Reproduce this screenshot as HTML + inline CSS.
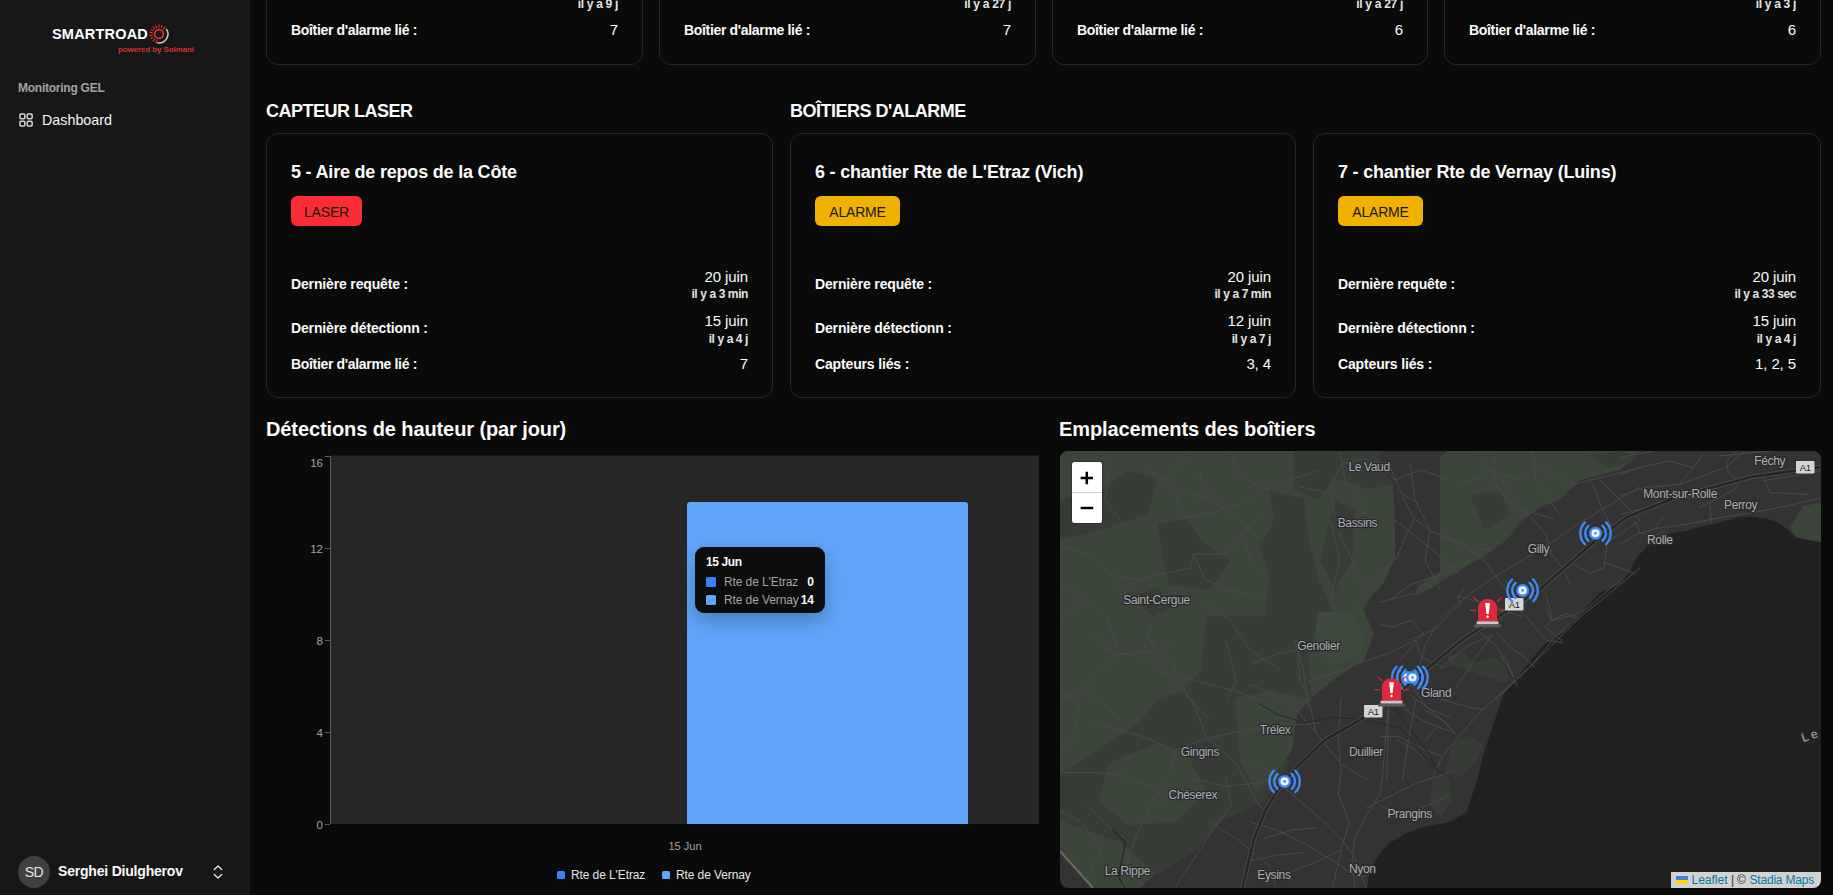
<!DOCTYPE html>
<html><head><meta charset="utf-8">
<style>
*{box-sizing:border-box;margin:0;padding:0}
html,body{width:1833px;height:895px;overflow:hidden;background:#0a0a0a;font-family:"Liberation Sans",sans-serif;color:#fafafa}
.abs{position:absolute}
#side{position:absolute;left:0;top:0;width:250px;height:895px;background:#171717}
.card{position:absolute;border:1px solid #262626;border-radius:12px;background:#0a0a0a}
.lbl{position:absolute;left:24px;font-weight:bold;font-size:14px;letter-spacing:-0.15px;white-space:nowrap}
.val{position:absolute;right:24px;text-align:right;white-space:nowrap;font-size:15px;letter-spacing:-0.1px}
.sub{position:absolute;right:24px;text-align:right;white-space:nowrap;font-size:12px;font-weight:bold;letter-spacing:-0.4px;color:#e5e5e5}
.title{position:absolute;left:24px;font-weight:bold;font-size:18px;letter-spacing:-0.2px;white-space:nowrap}
.badge{position:absolute;left:24px;top:62px;height:30px;border-radius:6px;font-size:14px;line-height:30px;padding:0 13px;color:#111;letter-spacing:-0.2px}
.h2{position:absolute;font-weight:bold;font-size:18px;letter-spacing:-0.5px;white-space:nowrap}
.h3{position:absolute;font-weight:bold;font-size:20px;letter-spacing:-0.15px;white-space:nowrap}
.t{position:absolute;line-height:1;white-space:nowrap}
</style></head>
<body>

<div id="side">
  <!-- logo -->
  <div class="abs" style="left:52px;top:26px;font-size:14.5px;font-weight:bold;letter-spacing:0.2px;color:#fff">SMARTROAD</div>
  <svg class="abs" style="left:149px;top:24px" width="22" height="22" viewBox="0 0 22 22"><g stroke="#e5322d" stroke-width="1.1"><line x1="14.05" y1="5.17" x2="16.17" y2="2.65"/><line x1="12.15" y1="4.08" x2="13.28" y2="0.98"/><line x1="10.00" y1="3.70" x2="10.00" y2="0.40"/><line x1="7.85" y1="4.08" x2="6.72" y2="0.98"/><line x1="5.95" y1="5.17" x2="3.83" y2="2.65"/><line x1="4.54" y1="6.85" x2="1.69" y2="5.20"/><line x1="3.80" y1="8.91" x2="0.55" y2="8.33"/><line x1="3.80" y1="11.09" x2="0.55" y2="11.67"/><line x1="4.54" y1="13.15" x2="1.69" y2="14.80"/><line x1="5.95" y1="14.83" x2="3.83" y2="17.35"/><line x1="7.85" y1="15.92" x2="6.72" y2="19.02"/></g><circle cx="10" cy="10" r="4.4" fill="none" stroke="#e5322d" stroke-width="1.7"/><path d="M17.29 4.90 A8.9 8.9 0 0 1 7.70 18.60" fill="none" stroke="#cfcfcf" stroke-width="1.5"/></svg>
  <div class="abs" style="left:118px;top:45px;font-size:8px;font-weight:bold;color:#d62f2f;letter-spacing:-0.1px">powered by Solmani</div>
  <div class="abs" style="left:18px;top:81px;font-size:12px;font-weight:bold;color:#a3a3a3;letter-spacing:-0.25px">Monitoring GEL</div>
  <svg class="abs" style="left:19px;top:113px" width="14" height="14" viewBox="0 0 14 14" fill="none" stroke="#d4d4d4" stroke-width="1.5"><rect x="0.9" y="0.9" width="4.9" height="4.9" rx="1"/><rect x="8.2" y="0.9" width="4.9" height="4.9" rx="1"/><rect x="0.9" y="8.2" width="4.9" height="4.9" rx="1"/><rect x="8.2" y="8.2" width="4.9" height="4.9" rx="1"/></svg>
  <div class="abs" style="left:42px;top:111.5px;font-size:14.3px;color:#f5f5f5">Dashboard</div>
  <!-- user -->
  <div class="abs" style="left:18px;top:856px;width:32px;height:32px;border-radius:50%;background:#404040;color:#e5e5e5;font-size:14px;line-height:32px;text-align:center;letter-spacing:-0.5px">SD</div>
  <div class="abs" style="left:58px;top:863px;font-size:14px;font-weight:bold;letter-spacing:-0.2px">Serghei Diulgherov</div>
  <svg class="abs" style="left:211px;top:864px" width="14" height="16" viewBox="0 0 14 16" fill="none" stroke="#e5e5e5" stroke-width="1.4" stroke-linecap="round" stroke-linejoin="round">
    <path d="M3.3 5.6 L7 2 L10.7 5.6"/><path d="M3.3 10.4 L7 14 L10.7 10.4"/>
  </svg>
</div>

<div class="card" style="left:266px;top:-200px;width:377px;height:265px"></div>
<div class="t" style="right:1215.00px;top:-2.16px;font-size:12px;font-weight:bold;letter-spacing:-0.3px;color:#e5e5e5">il y a 9 j</div>
<div class="t" style="left:291.00px;top:23.25px;font-size:14px;font-weight:bold;letter-spacing:-0.33px">Boîtier d'alarme lié :</div>
<div class="t" style="right:1215.00px;top:22.30px;font-size:15px;">7</div>
<div class="card" style="left:659px;top:-200px;width:377px;height:265px"></div>
<div class="t" style="right:822.00px;top:-2.16px;font-size:12px;font-weight:bold;letter-spacing:-0.3px;color:#e5e5e5">il y a 27 j</div>
<div class="t" style="left:684.00px;top:23.25px;font-size:14px;font-weight:bold;letter-spacing:-0.33px">Boîtier d'alarme lié :</div>
<div class="t" style="right:822.00px;top:22.30px;font-size:15px;">7</div>
<div class="card" style="left:1052px;top:-200px;width:376px;height:265px"></div>
<div class="t" style="right:430.00px;top:-2.16px;font-size:12px;font-weight:bold;letter-spacing:-0.3px;color:#e5e5e5">il y a 27 j</div>
<div class="t" style="left:1077.00px;top:23.25px;font-size:14px;font-weight:bold;letter-spacing:-0.33px">Boîtier d'alarme lié :</div>
<div class="t" style="right:430.00px;top:22.30px;font-size:15px;">6</div>
<div class="card" style="left:1444px;top:-200px;width:377px;height:265px"></div>
<div class="t" style="right:37.00px;top:-2.16px;font-size:12px;font-weight:bold;letter-spacing:-0.3px;color:#e5e5e5">il y a 3 j</div>
<div class="t" style="left:1469.00px;top:23.25px;font-size:14px;font-weight:bold;letter-spacing:-0.33px">Boîtier d'alarme lié :</div>
<div class="t" style="right:37.00px;top:22.30px;font-size:15px;">6</div>
<div class="t" style="left:266.00px;top:102.26px;font-size:18px;font-weight:bold;letter-spacing:-0.5px">CAPTEUR LASER</div>
<div class="t" style="left:790.00px;top:102.26px;font-size:18px;font-weight:bold;letter-spacing:-0.5px">BOÎTIERS D'ALARME</div>
<div class="card" style="left:266px;top:133px;width:507px;height:265px"></div>
<div class="t" style="left:291.00px;top:163.06px;font-size:18px;font-weight:bold;letter-spacing:-0.2px">5 - Aire de repos de la Côte</div>
<div class="abs" style="left:291px;top:196px;width:71px;height:30px;border-radius:6px;background:#fb2c36"></div>
<div class="t" style="left:-173.50px;width:1000px;text-align:center;top:204.75px;font-size:14px;color:#171717;letter-spacing:-0.2px">LASER</div>
<div class="t" style="left:291.00px;top:277.45px;font-size:14px;font-weight:bold;letter-spacing:-0.15px">Dernière requête :</div>
<div class="t" style="right:1085.00px;top:269.00px;font-size:15px;letter-spacing:-0.1px">20 juin</div>
<div class="t" style="right:1085.00px;top:288.14px;font-size:12px;font-weight:bold;letter-spacing:-0.4px;color:#e5e5e5">il y a 3 min</div>
<div class="t" style="left:291.00px;top:321.15px;font-size:14px;font-weight:bold;letter-spacing:-0.15px">Dernière détectionn :</div>
<div class="t" style="right:1085.00px;top:312.80px;font-size:15px;letter-spacing:-0.1px">15 juin</div>
<div class="t" style="right:1085.00px;top:332.54px;font-size:12px;font-weight:bold;letter-spacing:-0.4px;color:#e5e5e5">il y a 4 j</div>
<div class="t" style="left:291.00px;top:357.35px;font-size:14px;font-weight:bold;letter-spacing:-0.33px">Boîtier d'alarme lié :</div>
<div class="t" style="right:1085.00px;top:356.30px;font-size:15px;letter-spacing:-0.1px">7</div>
<div class="card" style="left:790px;top:133px;width:506px;height:265px"></div>
<div class="t" style="left:815.00px;top:163.06px;font-size:18px;font-weight:bold;letter-spacing:-0.2px">6 - chantier Rte de L'Etraz (Vich)</div>
<div class="abs" style="left:815px;top:196px;width:85px;height:30px;border-radius:6px;background:#f0b100"></div>
<div class="t" style="left:357.50px;width:1000px;text-align:center;top:204.75px;font-size:14px;color:#171717;letter-spacing:-0.2px">ALARME</div>
<div class="t" style="left:815.00px;top:277.45px;font-size:14px;font-weight:bold;letter-spacing:-0.15px">Dernière requête :</div>
<div class="t" style="right:562.00px;top:269.00px;font-size:15px;letter-spacing:-0.1px">20 juin</div>
<div class="t" style="right:562.00px;top:288.14px;font-size:12px;font-weight:bold;letter-spacing:-0.4px;color:#e5e5e5">il y a 7 min</div>
<div class="t" style="left:815.00px;top:321.15px;font-size:14px;font-weight:bold;letter-spacing:-0.15px">Dernière détectionn :</div>
<div class="t" style="right:562.00px;top:312.80px;font-size:15px;letter-spacing:-0.1px">12 juin</div>
<div class="t" style="right:562.00px;top:332.54px;font-size:12px;font-weight:bold;letter-spacing:-0.4px;color:#e5e5e5">il y a 7 j</div>
<div class="t" style="left:815.00px;top:357.35px;font-size:14px;font-weight:bold;letter-spacing:-0.15px">Capteurs liés :</div>
<div class="t" style="right:562.00px;top:356.30px;font-size:15px;letter-spacing:-0.1px">3, 4</div>
<div class="card" style="left:1313px;top:133px;width:508px;height:265px"></div>
<div class="t" style="left:1338.00px;top:163.06px;font-size:18px;font-weight:bold;letter-spacing:-0.2px">7 - chantier Rte de Vernay (Luins)</div>
<div class="abs" style="left:1338px;top:196px;width:85px;height:30px;border-radius:6px;background:#f0b100"></div>
<div class="t" style="left:880.50px;width:1000px;text-align:center;top:204.75px;font-size:14px;color:#171717;letter-spacing:-0.2px">ALARME</div>
<div class="t" style="left:1338.00px;top:277.45px;font-size:14px;font-weight:bold;letter-spacing:-0.15px">Dernière requête :</div>
<div class="t" style="right:37.00px;top:269.00px;font-size:15px;letter-spacing:-0.1px">20 juin</div>
<div class="t" style="right:37.00px;top:288.14px;font-size:12px;font-weight:bold;letter-spacing:-0.4px;color:#e5e5e5">il y a 33 sec</div>
<div class="t" style="left:1338.00px;top:321.15px;font-size:14px;font-weight:bold;letter-spacing:-0.15px">Dernière détectionn :</div>
<div class="t" style="right:37.00px;top:312.80px;font-size:15px;letter-spacing:-0.1px">15 juin</div>
<div class="t" style="right:37.00px;top:332.54px;font-size:12px;font-weight:bold;letter-spacing:-0.4px;color:#e5e5e5">il y a 4 j</div>
<div class="t" style="left:1338.00px;top:357.35px;font-size:14px;font-weight:bold;letter-spacing:-0.15px">Capteurs liés :</div>
<div class="t" style="right:37.00px;top:356.30px;font-size:15px;letter-spacing:-0.1px">1, 2, 5</div>
<div class="t" style="left:266.00px;top:418.67px;font-size:20px;font-weight:bold;letter-spacing:-0.1px">Détections de hauteur (par jour)</div>
<div class="t" style="left:1059.00px;top:418.67px;font-size:20px;font-weight:bold;letter-spacing:-0.1px">Emplacements des boîtiers</div>
<svg class="abs" style="left:0;top:0" width="1833" height="895" viewBox="0 0 1833 895">
  <rect x="331" y="455.5" width="708" height="368.5" fill="#262626"/>
  <path d="M687 505 Q687 502 690 502 L965 502 Q968 502 968 505 L968 824 L687 824 Z" fill="#60a5fa"/>
  <g stroke="#5a5a5a" stroke-width="1">
    <line x1="330.5" y1="456" x2="330.5" y2="824"/>
    <line x1="325" y1="456.5" x2="330" y2="456.5"/>
    <line x1="325" y1="548.5" x2="330" y2="548.5"/>
    <line x1="325" y1="640.5" x2="330" y2="640.5"/>
    <line x1="325" y1="732.5" x2="330" y2="732.5"/>
    <line x1="325" y1="824.5" x2="330" y2="824.5"/>
  </g>
  <g font-family="Liberation Sans" font-size="11.5" fill="#a3a3a3" text-anchor="end">
    <text x="323" y="467">16</text>
    <text x="323" y="552.5">12</text>
    <text x="323" y="644.5">8</text>
    <text x="323" y="736.5">4</text>
    <text x="323" y="828.5">0</text>
  </g>
  <text x="685" y="850" font-family="Liberation Sans" font-size="11" fill="#a3a3a3" text-anchor="middle">15 Jun</text>
  <rect x="557" y="871" width="8" height="8" rx="1.5" fill="#3b82f6"/>
  <text x="571" y="879" font-family="Liberation Sans" font-size="12" letter-spacing="-0.1" fill="#e5e5e5">Rte de L'Etraz</text>
  <rect x="662" y="871" width="8" height="8" rx="1.5" fill="#60a5fa"/>
  <text x="676" y="879" font-family="Liberation Sans" font-size="12" letter-spacing="-0.1" fill="#e5e5e5">Rte de Vernay</text>
  <defs>
    <filter id="tsh" x="-50%" y="-50%" width="200%" height="250%">
      <feDropShadow dx="0" dy="8" stdDeviation="10" flood-color="#000" flood-opacity="0.25"/>
    </filter>
  </defs>
  <rect x="695" y="547" width="130" height="66" rx="9" fill="#0a0a0a" filter="url(#tsh)"/>
  <text x="706" y="566" font-family="Liberation Sans" font-size="12" font-weight="bold" letter-spacing="-0.4" fill="#fafafa">15 Jun</text>
  <rect x="706" y="577" width="10" height="10" rx="1.5" fill="#3b82f6"/>
  <rect x="706" y="595" width="10" height="10" rx="1.5" fill="#60a5fa"/>
  <g font-family="Liberation Sans" font-size="12" letter-spacing="-0.1" fill="#a3a3a3">
    <text x="724" y="586">Rte de L'Etraz</text>
    <text x="724" y="604">Rte de Vernay</text>
  </g>
  <g font-family="Liberation Sans" font-size="12" font-weight="bold" fill="#fafafa" text-anchor="end">
    <text x="814" y="586">0</text>
    <text x="814" y="604">14</text>
  </g>
</svg>
<svg class="abs" style="left:0;top:0" width="1833" height="895" viewBox="0 0 1833 895">
<defs><clipPath id="mc"><rect x="1060" y="451" width="761" height="437" rx="8"/></clipPath></defs>
<g clip-path="url(#mc)">
<rect x="1060" y="451" width="761" height="437" fill="#333333"/>
<polygon points="1060.0,451.0 1380.0,451.0 1380.0,463.7 1393.0,484.8 1395.0,520.7 1395.0,556.6 1384.5,582.0 1369.7,598.8 1363.4,609.4 1374.0,634.0 1364.0,660.0 1336.0,678.0 1310.0,699.0 1297.0,714.0 1292.0,750.0 1271.0,781.0 1250.0,805.0 1220.8,821.3 1196.4,850.5 1160.0,870.0 1140.0,888.0 1092.0,888.0 1060.0,852.0" fill="#3b453a"/>
<polygon points="1206.2,616.6 1264.6,616.6 1293.8,645.9 1298.7,704.3 1274.4,723.8 1245.1,704.3 1211.0,684.8 1201.3,670.2" fill="#373c36"/>
<polygon points="1060.0,772.5 1079.5,762.8 1108.7,743.3 1137.9,723.8 1157.4,699.5 1181.8,689.7 1201.3,670.2 1211.0,684.8 1245.1,704.3 1269.5,723.8 1289.0,762.8 1264.6,801.8 1220.8,821.3 1196.4,850.5 1157.4,874.9 1118.5,840.7 1060.0,821.3" fill="#373c36"/>
<polygon points="1060.0,499.7 1079.5,494.8 1108.7,485.1 1128.2,470.5 1157.4,480.2 1147.7,514.3 1118.5,524.1 1089.2,533.8 1060.0,538.7" fill="#373c36"/>
<polygon points="1293.8,451.0 1332.8,451.0 1332.8,480.2 1318.2,499.7 1293.8,490.0" fill="#373c36"/>
<polygon points="1269.5,490.0 1303.6,499.7 1308.5,538.7 1318.2,577.7 1332.8,611.8 1313.3,645.9 1293.8,645.9 1264.6,616.6 1269.5,577.7 1259.7,548.4 1274.4,519.2" fill="#373c36"/>
<polygon points="1157.4,524.1 1186.7,519.2 1206.2,548.4 1181.8,563.1 1162.3,548.4" fill="#373c36"/>
<polygon points="1300.0,451.0 1380.0,451.0 1380.0,463.7 1393.0,484.8 1369.7,489.0 1340.0,480.0 1310.0,475.0" fill="#373c36"/>
<polygon points="1335.0,500.0 1355.0,510.0 1352.0,560.0 1335.0,590.0 1320.0,560.0" fill="#373c36"/>
<polygon points="1271.0,570.0 1312.0,570.0 1318.0,600.0 1307.0,640.0 1312.0,700.0 1290.0,715.0 1271.0,690.0 1265.0,640.0" fill="#373c36"/>
<polygon points="1369.7,489.0 1380.3,493.2 1388.7,506.0 1393.0,520.7 1390.8,539.7 1395.0,556.6 1384.5,577.7 1369.7,594.6 1352.8,603.0 1342.2,598.8 1354.9,577.7 1363.4,556.6 1359.1,535.5 1363.4,514.4 1371.8,503.8" fill="#3b453a"/>
<polygon points="1235.0,698.0 1270.0,690.0 1310.0,699.0 1297.0,714.0 1292.0,750.0 1271.0,781.0 1255.0,790.0 1240.0,760.0" fill="#3b453a"/>
<polygon points="1108.7,762.8 1157.4,743.3 1186.7,753.1 1206.2,792.0 1176.9,821.3 1128.2,826.1 1099.0,801.8" fill="#3b453a"/>
<polygon points="1447.8,451.0 1640.0,451.0 1620.0,470.0 1580.0,480.0 1560.0,499.6 1542.9,505.9 1521.7,520.7 1507.0,539.7 1490.0,552.4 1469.0,565.0 1447.8,577.7 1426.7,590.4 1414.0,596.7 1418.3,586.2 1443.6,569.3 1460.5,556.6 1473.2,541.8 1456.3,514.4 1452.0,493.2 1456.3,482.7 1447.8,463.7" fill="#3b453a"/>
<polygon points="1440.0,456.6 1447.8,451.0 1456.3,482.7 1452.0,493.2 1456.3,514.4 1473.2,541.8 1460.5,556.6 1443.6,569.3 1440.0,572.0" fill="#3b453a"/>
<polygon points="1789.9,527.6 1803.2,506.0 1821.0,502.6 1821.0,542.6 1796.5,537.6" fill="#3b453a"/>
<polygon points="1318.2,611.8 1352.3,611.8 1366.9,636.1 1357.2,660.5 1332.8,665.4 1313.3,645.9" fill="#3e493d"/>
<polygon points="1160.0,550.0 1200.0,540.0 1230.0,560.0 1210.0,590.0 1170.0,585.0" fill="#373c36"/>
<polygon points="1133.1,597.2 1157.4,587.4 1172.1,606.9 1152.6,616.6" fill="#373c36"/>
<polygon points="1470.0,495.0 1500.0,490.0 1510.0,515.0 1485.0,530.0" fill="#373c36"/>
<polygon points="1590.0,455.0 1620.0,451.0 1640.0,458.0 1610.0,468.0" fill="#373c36"/>
<polygon points="1432.0,780.0 1448.0,772.0 1452.0,800.0 1440.0,818.0 1430.0,805.0" fill="#373c36"/>
<polygon points="1447.0,656.0 1463.0,651.5 1474.0,662.7 1492.0,658.0 1505.0,653.7 1514.0,674.0 1505.0,683.0 1483.0,676.0 1465.0,669.0 1451.5,665.0" fill="#373c36"/>
<polygon points="1454.0,741.0 1469.0,736.0 1483.0,745.0 1476.0,763.0 1460.0,777.0 1447.0,772.0 1449.0,754.0" fill="#373c36"/>
<polygon points="1550.0,640.0 1575.0,625.0 1580.0,640.0 1560.0,655.0" fill="#373c36"/>
<polygon points="1821.0,542.6 1796.5,537.6 1786.5,529.3 1778.2,522.6 1766.5,518.4 1750.0,516.8 1736.6,517.6 1720.0,522.6 1703.3,526.0 1686.6,531.0 1670.0,533.4 1661.6,537.6 1646.6,547.6 1636.7,557.6 1630.0,571.0 1620.0,584.2 1600.8,592.3 1581.3,611.8 1564.2,631.3 1542.3,645.9 1522.8,670.2 1503.3,694.6 1493.6,723.8 1483.8,753.0 1476.5,782.3 1466.8,811.5 1450.0,822.0 1426.6,826.0 1407.0,833.0 1388.0,844.0 1375.0,860.0 1369.0,875.0 1367.0,888.0 1821.0,888.0" fill="#212121"/>
<g fill="none" stroke="#4a4a4a" stroke-width="1" stroke-linejoin="round">
<polyline points="1115.6,590.1 1151.8,576.2 1190.7,567.8 1193.5,553.9 1226.9,553.9 1254.7,520.5 1260.0,517.8"/>
<polyline points="1060.0,584.5 1085.0,595.6 1107.3,617.9 1118.4,654.1 1093.4,673.5 1076.7,700.0"/>
<polyline points="1190.7,451.0 1165.7,478.8 1171.3,487.2 1185.2,517.8 1199.1,515.0 1215.8,512.2 1240.8,503.9 1260.0,492.7"/>
<polyline points="1193.5,553.9 1204.6,579.0 1226.9,590.1 1260.0,595.6"/>
<polyline points="1087.8,601.2 1060.0,617.9"/>
<polyline points="1093.4,631.8 1115.6,654.1 1157.4,651.3 1171.3,645.7"/>
<polyline points="1151.8,623.5 1143.4,651.3 1157.4,670.7 1199.1,681.9 1232.5,690.2 1260.0,700.0"/>
<polyline points="1199.1,470.5 1204.6,492.7 1226.9,506.6"/>
<polyline points="1240.8,534.4 1251.9,562.3 1260.0,570.6"/>
<polyline points="1250.0,664.8 1277.6,653.8 1305.2,648.3"/>
<polyline points="1307.9,681.4 1332.8,673.1 1354.8,664.8 1387.9,653.8 1415.5,640.0"/>
<polyline points="1250.0,684.1 1291.4,703.4 1319.0,736.6 1341.0,764.1 1368.6,780.7"/>
<polyline points="1296.9,640.0 1299.7,681.4 1307.9,695.2 1316.2,733.8"/>
<polyline points="1250.0,761.4 1263.8,766.9 1277.6,777.9 1285.9,789.0 1305.2,805.5 1324.5,822.1 1341.0,838.6 1354.8,857.9 1365.9,886.9"/>
<polyline points="1341.0,697.9 1338.3,736.6 1341.0,772.4 1338.3,794.5 1349.3,822.1 1341.0,849.7 1332.8,886.9"/>
<polyline points="1396.2,739.3 1415.5,750.3 1429.3,764.1 1450.0,777.9"/>
<polyline points="1404.5,709.0 1426.6,722.8 1450.0,731.0"/>
<polyline points="1410.0,695.2 1429.3,709.0 1450.0,717.2"/>
<polyline points="1387.9,709.0 1382.4,777.9 1379.7,794.5 1365.9,816.6 1354.8,838.6 1352.1,860.7 1354.8,886.9"/>
<polyline points="1365.9,808.3 1393.4,794.5 1415.5,783.4 1450.0,772.4"/>
<polyline points="1250.0,822.1 1277.6,830.3 1305.2,844.1 1332.8,860.7 1349.3,871.7 1365.9,877.2"/>
<polyline points="1263.8,838.6 1291.4,830.3 1316.2,827.6"/>
<polyline points="1250.0,860.7 1277.6,855.2 1305.2,852.4"/>
<polyline points="1291.4,871.7 1319.0,860.7 1341.0,849.7"/>
<polyline points="1379.7,805.5 1404.5,816.6 1426.6,805.5 1450.0,794.5"/>
<polyline points="1415.5,640.0 1421.0,656.6 1443.1,667.6 1450.0,664.8"/>
<polyline points="1093.1,722.8 1142.8,736.6 1175.9,750.4 1203.5,739.4 1253.2,728.3 1319.5,722.8"/>
<polyline points="1175.9,750.4 1170.4,772.5 1151.1,805.6 1137.3,833.2 1129.0,855.3 1123.5,887.0"/>
<polyline points="1192.5,700.7 1206.3,736.6 1236.6,764.2 1253.2,794.6 1261.5,808.4"/>
<polyline points="1192.5,778.0 1225.6,786.3 1253.2,783.5 1280.8,778.0"/>
<polyline points="1209.0,822.2 1236.6,838.7 1269.8,866.3 1275.3,887.0"/>
<polyline points="1060.0,689.7 1079.3,703.5 1073.8,736.6 1060.0,750.4"/>
<polyline points="1060.0,772.5 1093.1,772.5 1120.7,775.2 1151.1,786.3 1170.4,805.6"/>
<polyline points="1225.6,778.0 1231.1,805.6 1214.6,827.7 1181.4,877.4 1175.9,887.0"/>
<polyline points="1087.6,805.6 1115.2,833.2 1126.2,838.7"/>
<polyline points="1095.9,640.0 1115.2,653.8 1142.8,656.6"/>
<polyline points="1060.0,811.1 1082.1,822.2 1101.4,849.8 1087.6,877.4"/>
<polyline points="1151.1,640.0 1159.4,667.6 1181.4,689.7 1192.5,700.7"/>
<polyline points="1225.6,640.0 1236.6,681.4 1225.6,700.7"/>
<polyline points="1294.6,640.0 1302.9,667.6 1308.4,709.0"/>
<polyline points="1640.0,567.8 1606.9,595.6 1579.1,617.9 1551.3,645.7 1523.4,673.5 1495.6,700.0"/>
<polyline points="1640.0,487.2 1606.9,506.6 1579.1,523.3 1551.3,542.8 1523.4,559.5 1495.6,576.2 1467.8,595.6 1440.0,617.9"/>
<polyline points="1640.0,520.5 1606.9,542.8 1604.1,567.8 1590.2,573.4 1570.7,562.3"/>
<polyline points="1512.3,495.5 1545.7,534.4 1551.3,553.9 1562.4,567.8 1570.7,584.5"/>
<polyline points="1495.6,576.2 1517.9,606.8 1531.8,623.5 1545.7,640.2 1562.4,642.9"/>
<polyline points="1545.7,606.8 1551.3,620.7 1573.5,615.1 1584.6,609.6"/>
<polyline points="1590.2,478.8 1601.3,506.6 1612.5,528.9"/>
<polyline points="1440.0,534.4 1481.7,556.7 1495.6,576.2"/>
<polyline points="1456.7,595.6 1495.6,606.8 1523.4,617.9"/>
<polyline points="1473.4,626.2 1495.6,645.7 1509.5,668.0 1517.9,687.4"/>
<polyline points="1440.0,668.0 1467.8,645.7 1492.9,634.6"/>
<polyline points="1604.1,562.3 1634.7,573.4"/>
<polyline points="1492.9,451.0 1495.6,473.3 1512.3,495.5"/>
<polyline points="1531.8,451.0 1537.4,467.7 1573.5,484.4 1606.9,476.0 1640.0,467.7"/>
<polyline points="1620.0,544.3 1636.7,534.3 1656.6,528.4 1686.6,524.3 1719.9,517.6 1753.2,512.6 1786.5,506.0 1821.0,497.6"/>
<polyline points="1620.0,496.0 1645.0,487.6 1680.0,484.3 1703.3,476.0 1728.2,466.0 1736.6,457.7 1744.9,451.0"/>
<polyline points="1680.0,484.3 1681.6,481.0 1693.3,467.7 1703.3,454.3"/>
<polyline points="1620.0,474.3 1645.0,466.0 1670.0,461.0 1693.3,467.7"/>
<polyline points="1698.3,507.6 1713.3,501.0 1734.9,489.3 1739.9,481.0 1728.2,472.6 1726.6,461.0 1736.6,451.0"/>
<polyline points="1763.2,476.0 1769.9,492.6 1808.2,494.3"/>
<polyline points="1761.5,481.0 1821.0,471.0"/>
<polyline points="1709.9,504.3 1711.6,522.6"/>
<polyline points="1620.0,514.3 1653.3,506.0 1670.0,499.3"/>
<polyline points="1635.0,520.9 1640.0,532.6 1653.3,535.9 1665.0,530.9"/>
<polyline points="1665.0,517.6 1656.6,524.3 1656.6,529.3"/>
<polyline points="1620.0,457.7 1636.7,454.3 1653.3,451.0"/>
<polyline points="1719.9,456.0 1769.9,451.0"/>
<polyline points="1331.7,482.7 1342.2,463.7 1363.4,459.4 1388.7,463.7 1401.4,493.2 1414.0,518.6 1430.9,531.3 1469.0,546.0 1490.1,550.3"/>
<polyline points="1401.4,493.2 1418.3,503.8"/>
<polyline points="1300.0,486.9 1331.7,493.2 1333.8,514.4"/>
<polyline points="1414.0,518.6 1397.1,556.6 1380.3,577.7 1363.4,594.6 1346.5,615.7"/>
<polyline points="1490.1,467.9 1500.6,493.2 1521.8,510.1 1553.4,518.6"/>
<polyline points="1460.5,482.7 1490.1,476.3 1511.2,482.7"/>
<polyline points="1532.3,451.0 1536.5,482.7 1560.0,514.4"/>
<polyline points="1338.0,531.3 1352.8,560.8 1363.4,588.3"/>
<polyline points="1620.0,580.0 1581.1,613.5 1554.3,638.1 1532.0,664.9 1505.1,689.5 1482.8,709.6 1460.4,734.2 1442.6,756.5 1431.4,780.0"/>
<polyline points="1545.4,593.4 1549.8,609.1 1552.1,620.2 1545.4,626.9 1558.8,638.1 1563.2,642.6"/>
<polyline points="1552.1,620.2 1565.5,613.5 1576.6,618.0"/>
<polyline points="1496.2,631.4 1509.6,647.0 1523.0,656.0 1534.2,667.2"/>
<polyline points="1491.7,635.9 1478.3,653.7 1456.0,687.3"/>
<polyline points="1435.9,624.7 1424.7,647.0 1420.2,664.9"/>
<polyline points="1380.0,624.7 1393.4,626.9 1411.3,620.2 1424.7,635.9"/>
<polyline points="1409.1,640.3 1435.9,629.2 1447.0,615.8 1460.4,604.6 1458.2,597.9 1464.9,586.7"/>
<polyline points="1420.2,687.3 1438.1,698.4 1469.4,707.4 1485.0,709.6"/>
<polyline points="1411.3,685.0 1424.7,705.1 1435.9,714.1 1456.0,734.2"/>
<polyline points="1424.7,709.6 1447.0,723.0 1453.7,734.2"/>
<polyline points="1424.7,740.9 1438.1,725.3"/>
<polyline points="1380.0,736.4 1397.9,736.4 1424.7,749.8 1442.6,756.5"/>
<polyline points="1388.9,705.1 1386.7,780.0"/>
<polyline points="1415.8,700.7 1409.1,736.4 1402.3,780.0"/>
<polyline points="1400.1,660.4 1413.5,644.8 1424.7,631.4"/>
<polyline points="1505.1,580.0 1514.1,593.4 1518.5,602.3"/>
<polyline points="1380.0,602.3 1397.9,597.9 1413.5,593.4"/>
<polyline points="1380.0,464.0 1395.0,480.0 1420.0,470.0 1450.0,480.0"/>
<polyline points="1395.0,520.0 1420.0,540.0 1445.0,560.0 1460.0,575.0"/>
<polyline points="1410.0,464.0 1415.0,500.0 1430.0,530.0 1425.0,560.0 1440.0,590.0"/>
<polyline points="1390.0,600.0 1410.0,585.0 1440.0,575.0 1470.0,560.0"/>
<polyline points="1340.0,451.0 1345.0,480.0 1360.0,500.0 1370.0,530.0"/>
<polyline points="1230.0,451.0 1240.0,475.0 1265.0,490.0 1290.0,480.0 1320.0,470.0"/>
<polyline points="1100.0,451.0 1110.0,470.0 1105.0,500.0 1120.0,520.0"/>
<polyline points="1150.0,470.0 1180.0,490.0 1210.0,500.0 1240.0,520.0 1260.0,540.0"/>
<polyline points="1060.0,545.0 1090.0,555.0 1110.0,575.0 1140.0,580.0"/>
<polyline points="1200.0,600.0 1230.0,620.0 1250.0,650.0 1280.0,670.0"/>
<polyline points="1150.0,640.0 1170.0,660.0 1190.0,700.0 1210.0,720.0"/>
<polyline points="1060.0,700.0 1080.0,690.0 1100.0,700.0 1120.0,720.0"/>
<polyline points="1330.0,520.0 1340.0,560.0 1330.0,600.0 1340.0,630.0"/>
<polyline points="1480.0,451.0 1490.0,470.0 1520.0,480.0 1540.0,470.0"/>
<polyline points="1600.0,480.0 1620.0,500.0 1640.0,520.0"/>
</g>
<polyline points="1258.3,703.4 1277.6,714.5 1305.2,722.8 1332.8,717.2 1365.9,720.0 1401.7,728.3 1415.5,744.8 1429.3,764.1 1450.0,777.9" fill="none" stroke="#262626" stroke-width="1"/>
<polyline points="1496.2,656.0 1505.1,664.9 1509.6,676.1 1518.5,680.6 1516.3,689.5" fill="none" stroke="#262626" stroke-width="1"/>
<polyline points="1395.6,707.4 1404.6,723.0 1415.8,736.4 1429.2,754.3 1438.1,772.2" fill="none" stroke="#262626" stroke-width="1"/>
<polyline points="1060,851 1076,869 1093,888" fill="none" stroke="#6a675f" stroke-width="2.2"/>
<polyline points="1112.6,830 1125.7,842.3 1120,867.8 1118.4,877.2 1125,888" fill="none" stroke="#252525" stroke-width="1.2"/>
<polyline points="1242.0,890.0 1254.0,839.0 1265.0,811.0 1277.0,791.0 1296.0,768.0 1325.0,740.0 1365.0,717.0 1391.0,700.0 1410.0,683.0 1462.0,640.0 1538.0,591.0 1595.0,541.0 1627.0,517.0 1677.0,497.0 1751.0,477.0 1821.0,467.0" fill="none" stroke="#4a4a4a" stroke-width="4.5" stroke-linejoin="round"/>
<polyline points="1242.0,890.0 1254.0,839.0 1265.0,811.0 1277.0,791.0 1296.0,768.0 1325.0,740.0 1365.0,717.0 1391.0,700.0 1410.0,683.0 1462.0,640.0 1538.0,591.0 1595.0,541.0 1627.0,517.0 1677.0,497.0 1751.0,477.0 1821.0,467.0" fill="none" stroke="#252525" stroke-width="2.6" stroke-linejoin="round"/>
<rect x="1364" y="705" width="18.5" height="12.5" rx="1" fill="#d4d4d4"/>
<text x="1373.25" y="715" font-family="Liberation Sans" font-size="9.5" fill="#222" text-anchor="middle" letter-spacing="-0.3">A1</text>
<rect x="1505" y="598" width="18.5" height="12.5" rx="1" fill="#d4d4d4"/>
<text x="1514.25" y="608" font-family="Liberation Sans" font-size="9.5" fill="#222" text-anchor="middle" letter-spacing="-0.3">A1</text>
<rect x="1796" y="461" width="18.5" height="12.5" rx="1" fill="#d4d4d4"/>
<text x="1805.25" y="471" font-family="Liberation Sans" font-size="9.5" fill="#222" text-anchor="middle" letter-spacing="-0.3">A1</text>
<g font-family="Liberation Sans" font-size="12" fill="#aaadb3" stroke="#2a2a2a" stroke-width="2.4" paint-order="stroke" letter-spacing="-0.35">
<text x="1348.4" y="470.5">Le Vaud</text>
<text x="1337.7" y="527">Bassins</text>
<text x="1123.3" y="603.5">Saint-Cergue</text>
<text x="1297.3" y="649.7">Genolier</text>
<text x="1259.7" y="734">Trélex</text>
<text x="1180.8" y="756.4">Gingins</text>
<text x="1349" y="756.4">Duillier</text>
<text x="1168.6" y="798.8">Chéserex</text>
<text x="1387.4" y="817.5">Prangins</text>
<text x="1104.8" y="875">La Rippe</text>
<text x="1257.3" y="878.7">Eysins</text>
<text x="1349" y="872.9">Nyon</text>
<text x="1754.2" y="464.6">Féchy</text>
<text x="1643.2" y="497.7">Mont-sur-Rolle</text>
<text x="1724" y="509">Perroy</text>
<text x="1647" y="543.5">Rolle</text>
<text x="1527.7" y="552.5">Gilly</text>
<text x="1421" y="697">Gland</text>
<text x="1803" y="742" transform="rotate(-18 1803 742)" letter-spacing="3">Le</text>
</g>
</g>
<g transform="translate(1595.5,533.3)" fill="none" stroke="#3d8bf7" stroke-width="2.3" stroke-linecap="round"><circle r="5.3" fill="#eef0ff" stroke-width="2.4"/><circle r="1.3" fill="#3d8bf7" stroke="none"/><path d="M-7.03,-7.53 A10.3,10.3 0 0 0 -7.03,7.53"/><path d="M7.03,-7.53 A10.3,10.3 0 0 1 7.03,7.53"/><path d="M-10.59,-10.90 A15.2,15.2 0 0 0 -10.59,10.90"/><path d="M10.59,-10.90 A15.2,15.2 0 0 1 10.59,10.90"/></g>
<g transform="translate(1522.6,590.4)" fill="none" stroke="#3d8bf7" stroke-width="2.3" stroke-linecap="round"><circle r="5.3" fill="#eef0ff" stroke-width="2.4"/><circle r="1.3" fill="#3d8bf7" stroke="none"/><path d="M-7.03,-7.53 A10.3,10.3 0 0 0 -7.03,7.53"/><path d="M7.03,-7.53 A10.3,10.3 0 0 1 7.03,7.53"/><path d="M-10.59,-10.90 A15.2,15.2 0 0 0 -10.59,10.90"/><path d="M10.59,-10.90 A15.2,15.2 0 0 1 10.59,10.90"/></g>
<g transform="translate(1487.6,598.7)"><path d="M-9.6,22.7 L-9.6,9.6 A9.6,9.6 0 0 1 9.6,9.6 L9.6,22.7 Z" fill="#dc2a3c"/><path d="M-2.4,4.2 L2.4,4.2 L1.1,15.2 L-1.1,15.2 Z" fill="#fff"/><circle cx="0" cy="18" r="1.2" fill="#fff"/><rect x="-10.9" y="22.7" width="21.8" height="3" fill="#c8c8c8"/><rect x="-13.3" y="25.7" width="26.6" height="2.8" fill="#5a5a5a"/><g stroke="#d42a3a" stroke-width="1.2"><line x1="-17.6" y1="11.7" x2="-11" y2="11.7"/><line x1="11" y1="11.7" x2="17.4" y2="11.7"/><line x1="-14.3" y1="-1.4" x2="-9.4" y2="2.8"/><line x1="9.6" y1="2.8" x2="14.3" y2="-1.4"/></g></g>
<g transform="translate(1407.3,677.5)" fill="none" stroke="#3d8bf7" stroke-width="2.3" stroke-linecap="round"><circle r="5.3" fill="#eef0ff" stroke-width="2.4"/><circle r="1.3" fill="#3d8bf7" stroke="none"/><path d="M-7.03,-7.53 A10.3,10.3 0 0 0 -7.03,7.53"/><path d="M7.03,-7.53 A10.3,10.3 0 0 1 7.03,7.53"/><path d="M-10.59,-10.90 A15.2,15.2 0 0 0 -10.59,10.90"/><path d="M10.59,-10.90 A15.2,15.2 0 0 1 10.59,10.90"/></g>
<g transform="translate(1412.5,677.5)" fill="none" stroke="#3d8bf7" stroke-width="2.3" stroke-linecap="round"><circle r="5.3" fill="#eef0ff" stroke-width="2.4"/><circle r="1.3" fill="#3d8bf7" stroke="none"/><path d="M-7.03,-7.53 A10.3,10.3 0 0 0 -7.03,7.53"/><path d="M7.03,-7.53 A10.3,10.3 0 0 1 7.03,7.53"/><path d="M-10.59,-10.90 A15.2,15.2 0 0 0 -10.59,10.90"/><path d="M10.59,-10.90 A15.2,15.2 0 0 1 10.59,10.90"/></g>
<g transform="translate(1391.5,678)"><path d="M-9.6,22.7 L-9.6,9.6 A9.6,9.6 0 0 1 9.6,9.6 L9.6,22.7 Z" fill="#dc2a3c"/><path d="M-2.4,4.2 L2.4,4.2 L1.1,15.2 L-1.1,15.2 Z" fill="#fff"/><circle cx="0" cy="18" r="1.2" fill="#fff"/><rect x="-10.9" y="22.7" width="21.8" height="3" fill="#c8c8c8"/><rect x="-13.3" y="25.7" width="26.6" height="2.8" fill="#5a5a5a"/><g stroke="#d42a3a" stroke-width="1.2"><line x1="-17.6" y1="11.7" x2="-11" y2="11.7"/><line x1="11" y1="11.7" x2="17.4" y2="11.7"/><line x1="-14.3" y1="-1.4" x2="-9.4" y2="2.8"/><line x1="9.6" y1="2.8" x2="14.3" y2="-1.4"/></g></g>
<g transform="translate(1284.6,781.4)" fill="none" stroke="#3d8bf7" stroke-width="2.3" stroke-linecap="round"><circle r="5.3" fill="#eef0ff" stroke-width="2.4"/><circle r="1.3" fill="#3d8bf7" stroke="none"/><path d="M-7.03,-7.53 A10.3,10.3 0 0 0 -7.03,7.53"/><path d="M7.03,-7.53 A10.3,10.3 0 0 1 7.03,7.53"/><path d="M-10.59,-10.90 A15.2,15.2 0 0 0 -10.59,10.90"/><path d="M10.59,-10.90 A15.2,15.2 0 0 1 10.59,10.90"/></g>
<rect x="1071.5" y="461.5" width="31" height="62" rx="3" fill="none" stroke="rgba(0,0,0,0.2)" stroke-width="1"/>
<rect x="1072" y="462" width="30" height="61" rx="2.5" fill="#fff"/>
<line x1="1072" y1="492.5" x2="1102" y2="492.5" stroke="#ccc" stroke-width="1"/>
<path d="M1086.8 471.8 V484.2 M1080.6 478 H1093" stroke="#000" stroke-width="2.5"/>
<path d="M1080.6 508 H1093.2" stroke="#000" stroke-width="2.5"/>
<g clip-path="url(#mc)"><rect x="1671" y="872" width="150" height="16" fill="rgba(255,255,255,0.8)"/></g>
<rect x="1676" y="876" width="12" height="4" fill="#4c7be1"/><rect x="1676" y="880" width="12" height="4" fill="#ffd500"/>
<text x="1691.5" y="884" font-family="Liberation Sans" font-size="12" fill="#0078a8">Leaflet</text>
<text x="1731" y="883.5" font-family="Liberation Sans" font-size="12" fill="#333">|</text>
<text x="1737" y="884" font-family="Liberation Sans" font-size="12" fill="#333">©</text>
<text x="1749.5" y="884" font-family="Liberation Sans" font-size="12" fill="#0078a8" letter-spacing="-0.2">Stadia Maps</text>
</svg>
</body></html>
